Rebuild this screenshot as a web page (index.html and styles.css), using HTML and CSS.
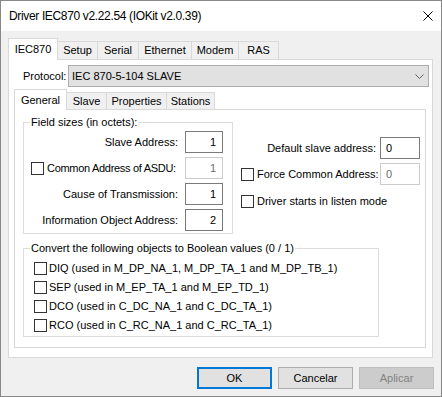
FILE: index.html
```html
<!DOCTYPE html>
<html lang="en">
<head>
    <meta charset="UTF-8">
    <title>Driver IEC870</title>
    <link rel="stylesheet" href="styles.css">
</head>
<body>
    <div class="window">
        <div class="titlebar">
            <span class="title">Driver IEC870 v2.22.54 (IOKit v2.0.39)</span>
            <svg class="close" width="10" height="10" viewBox="0 0 10 10">
                <path d="M0.5 0.5 L9.5 9.5 M9.5 0.5 L0.5 9.5" stroke="#000" stroke-width="1" fill="none"/>
            </svg>
        </div>

        <div class="client">
            <div class="tabs">
                <div class="tab active tab-iec870">IEC870</div>
                <div class="tab tab-setup">Setup</div>
                <div class="tab tab-serial">Serial</div>
                <div class="tab tab-ethernet">Ethernet</div>
                <div class="tab tab-modem">Modem</div>
                <div class="tab tab-ras">RAS</div>
            </div>

            <div class="outer-panel">
                <div class="protocol-row">
                    <span class="protocol-label">Protocol:</span>
                    <div class="select">
                        <span>IEC 870-5-104 SLAVE</span>
                        <svg width="9" height="5" viewBox="0 0 9 5">
                            <polyline points="0.5,0.5 4.5,4.5 8.5,0.5" stroke="#606060" stroke-width="1" fill="none"/>
                        </svg>
                    </div>
                </div>

                <div class="tabs inner-tabs">
                    <div class="tab active tab-general">General</div>
                    <div class="tab tab-slave">Slave</div>
                    <div class="tab tab-properties">Properties</div>
                    <div class="tab tab-stations">Stations</div>
                </div>

                <div class="inner-panel">
                    <div class="general-grid">
                        <fieldset class="group">
                            <legend>Field sizes (in octets):</legend>
                            <div class="field-list">
                                <div class="field-row">
                                    <span>Slave Address:</span>
                                    <span class="num-input">1</span>
                                </div>
                                <div class="field-row">
                                    <label class="check push"><span class="checkbox"></span><span class="tight">Common Address of ASDU:</span></label>
                                    <span class="num-input disabled">1</span>
                                </div>
                                <div class="field-row">
                                    <span>Cause of Transmission:</span>
                                    <span class="num-input">1</span>
                                </div>
                                <div class="field-row">
                                    <span>Information Object Address:</span>
                                    <span class="num-input">2</span>
                                </div>
                            </div>
                        </fieldset>

                        <div class="right-col">
                            <div class="option-row end">
                                <span>Default slave address:</span>
                                <span class="text-input">0</span>
                            </div>
                            <div class="option-row force">
                                <label class="check"><span class="checkbox"></span>Force Common Address:</label>
                                <span class="text-input disabled">0</span>
                            </div>
                            <div class="option-row listen">
                                <label class="check"><span class="checkbox"></span>Driver starts in listen mode</label>
                            </div>
                        </div>
                    </div>

                    <fieldset class="group boolean-group">
                        <legend>Convert the following objects to Boolean values (0 / 1)</legend>
                        <div class="check-list">
                            <label class="check"><span class="checkbox"></span>DIQ (used in M_DP_NA_1, M_DP_TA_1 and M_DP_TB_1)</label>
                            <label class="check"><span class="checkbox"></span>SEP (used in M_EP_TA_1 and M_EP_TD_1)</label>
                            <label class="check"><span class="checkbox"></span>DCO (used in C_DC_NA_1 and C_DC_TA_1)</label>
                            <label class="check"><span class="checkbox"></span>RCO (used in C_RC_NA_1 and C_RC_TA_1)</label>
                        </div>
                    </fieldset>
                </div>
            </div>

            <div class="buttons">
                <button class="btn default">OK</button>
                <button class="btn">Cancelar</button>
                <button class="btn" disabled>Aplicar</button>
            </div>
        </div>
    </div>
</body>
</html>
```

FILE: styles.css
```css
* {
    margin: 0;
    padding: 0;
    box-sizing: border-box;
}

body {
    font-family: "Liberation Sans", Arial, sans-serif;
    font-size: 11px;
    line-height: 13px;
    color: #000;
    background-color: #fff;
    white-space: nowrap;
}

.window {
    width: 442px;
    height: 397px;
    border: 1px solid #888;
    display: flex;
    flex-direction: column;
}

.titlebar {
    height: 30px;
    background-color: #fff;
    display: flex;
    align-items: center;
    justify-content: space-between;
    padding: 0 8px 0 8px;
}

.title {
    font-size: 12px;
    letter-spacing: -0.35px;
}

.client {
    flex: 1;
    background-color: #f0f0f0;
    padding: 7px 7px 0 7px;
}

/* tab strips */
.tabs {
    display: flex;
    align-items: flex-end;
}

.tab {
    height: 18px;
    border: 1px solid #d9d9d9;
    border-bottom: none;
    margin-left: -1px;
    background-color: #f0f0f0;
    display: flex;
    align-items: center;
    justify-content: center;
}

.tab:first-child {
    margin-left: 0;
}

.tab.active {
    height: 22px;
    margin-bottom: -1px;
    background-color: #fff;
    position: relative;
}

.tab-iec870 { width: 50px; }
.tab-setup { width: 41px; }
.tab-serial { width: 42px; }
.tab-ethernet { width: 54px; }
.tab-modem { width: 48px; }
.tab-ras { width: 41px; }

.inner-tabs {
    margin: 2px 0 0 5px;
}

.inner-tabs .tab {
    height: 17px;
}

.inner-tabs .tab.active {
    height: 21px;
}

.tab-general { width: 53px; }
.tab-slave { width: 41px; }
.tab-properties { width: 61px; }
.tab-stations { width: 49px; }

.outer-panel {
    width: 425px;
    height: 299px;
    border: 1px solid #d9d9d9;
    background-color: #fff;
}

.protocol-row {
    display: flex;
    align-items: center;
    margin: 5px 0 0 14px;
}

.protocol-label {
    width: 45px;
}

.select {
    width: 361px;
    height: 22px;
    border: 1px solid #adadad;
    background-color: #e1e1e1;
    display: flex;
    align-items: center;
    justify-content: space-between;
    padding: 0 4px 0 3px;
}

.inner-panel {
    width: 412px;
    height: 239px;
    margin-left: 5px;
    border: 1px solid #d9d9d9;
    background-color: #fff;
    padding: 6px 0 0 8px;
}

.general-grid {
    display: grid;
    grid-template-columns: 210px 179px;
    column-gap: 8px;
}

/* group boxes */
.group {
    border: 1px solid #dcdcdc;
    min-width: 0;
}

.group legend {
    margin-left: 6px;
    padding: 0 1px;
}

.field-list {
    display: flex;
    flex-direction: column;
    gap: 4px;
    padding: 2px 9px 2px 7px;
}

.field-row {
    display: flex;
    align-items: center;
    justify-content: flex-end;
    gap: 7px;
    height: 22px;
}

.field-row .push {
    margin-right: auto;
}

.tight {
    letter-spacing: -0.3px;
}

.num-input,
.text-input {
    height: 22px;
    border: 1px solid #7a7a7a;
    background-color: #fff;
    display: flex;
    align-items: center;
}

.num-input {
    width: 38px;
    justify-content: flex-end;
    padding-right: 6px;
}

.text-input {
    width: 40px;
    padding-left: 5px;
}

.disabled {
    border-color: #cccccc;
    color: #6d6d6d;
}

.checkbox {
    width: 13px;
    height: 13px;
    border: 1px solid #333;
    background-color: #fff;
    flex-shrink: 0;
}

.check {
    display: flex;
    align-items: center;
    gap: 3px;
}

.right-col {
    margin-top: 21px;
}

.option-row {
    display: flex;
    align-items: center;
    height: 22px;
}

.option-row.end {
    justify-content: flex-end;
    gap: 4px;
}

.option-row.force {
    justify-content: space-between;
    margin-top: 4px;
}

.option-row.listen {
    height: 13px;
    margin-top: 10px;
}

.boolean-group {
    width: 356px;
    margin-top: 8px;
}

.check-list {
    padding: 4px 0 1px 10px;
}

.check-list .check {
    height: 19px;
    gap: 2px;
}

/* dialog buttons */
.buttons {
    display: flex;
    justify-content: flex-end;
    gap: 6px;
    margin-top: 9px;
}

.btn {
    width: 75px;
    height: 22px;
    font-family: inherit;
    font-size: 11px;
    color: #000;
    background-color: #e1e1e1;
    border: 1px solid #adadad;
}

.btn.default {
    border-color: #0078d7;
    box-shadow: inset 0 0 0 1px #0078d7;
}

.btn:disabled {
    background-color: #cccccc;
    border-color: #bfbfbf;
    color: #838383;
}
```
